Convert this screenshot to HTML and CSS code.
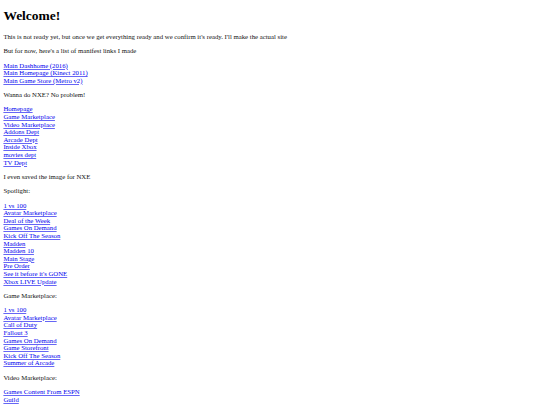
FILE: index.html
```html
<!DOCTYPE html>
<html>
<head>
<meta charset="utf-8">
<title>Welcome!</title>
<link rel="stylesheet" href="styles.css">
</head>
<body class="page">
<h1 class="title">Welcome!</h1>
<p class="para">This is not ready yet, but once we get everything ready and we confirm it's ready. I'll make the actual site</p>
<p class="para">But for now, here's a list of manifest links I made</p>
<p class="para">
<a class="link" href="#">Main Dashhome (2016)</a><br>
<a class="link" href="#">Main Homepage (Kinect 2011)</a><br>
<a class="link" href="#">Main Game Store (Metro v2)</a>
</p>
<p class="para">Wanna do NXE? No problem!</p>
<p class="para">
<a class="link" href="#">Homepage</a><br>
<a class="link" href="#">Game Marketplace</a><br>
<a class="link" href="#">Video Marketplace</a><br>
<a class="link" href="#">Addons Dept</a><br>
<a class="link" href="#">Arcade Dept</a><br>
<a class="link" href="#">Inside Xbox</a><br>
<a class="link" href="#">movies dept</a><br>
<a class="link" href="#">TV Dept</a>
</p>
<p class="para">I even saved the image for NXE</p>
<p class="para">Spotlight:</p>
<p class="para">
<a class="link" href="#">1 vs 100</a><br>
<a class="link" href="#">Avatar Marketplace</a><br>
<a class="link" href="#">Deal of the Week</a><br>
<a class="link" href="#">Games On Demand</a><br>
<a class="link" href="#">Kick Off The Season</a><br>
<a class="link" href="#">Madden</a><br>
<a class="link" href="#">Madden 10</a><br>
<a class="link" href="#">Main Stage</a><br>
<a class="link" href="#">Pre Order</a><br>
<a class="link" href="#">See it before it's GONE</a><br>
<a class="link" href="#">Xbox LIVE Update</a>
</p>
<p class="para">Game Marketplace:</p>
<p class="para">
<a class="link" href="#">1 vs 100</a><br>
<a class="link" href="#">Avatar Marketplace</a><br>
<a class="link" href="#">Call of Duty</a><br>
<a class="link" href="#">Fallout 3</a><br>
<a class="link" href="#">Games On Demand</a><br>
<a class="link" href="#">Game Storefront</a><br>
<a class="link" href="#">Kick Off The Season</a><br>
<a class="link" href="#">Summer of Arcade</a>
</p>
<p class="para">Video Marketplace:</p>
<p class="para">
<a class="link" href="#">Games Content From ESPN</a><br>
<a class="link" href="#">Guild</a>
</p>
</body>
</html>
```
FILE: styles.css
```css
html {
  background: #ffffff;
}
.page {
  margin: 3.375px;
  font-family: "Liberation Serif", "Times New Roman", serif;
  font-size: 6.75px;
  line-height: 7.6px;
  color: #111111;
}
.title {
  font-size: 13.5px;
  line-height: 14.5px;
  font-weight: bold;
  margin: 6px 0 9.05px;
  color: #000000;
}
.para {
  margin: 6.75px 0;
}
.link {
  color: #0000ee;
  text-decoration: underline;
  text-decoration-color: rgba(0, 0, 238, 0.6);
}
```
